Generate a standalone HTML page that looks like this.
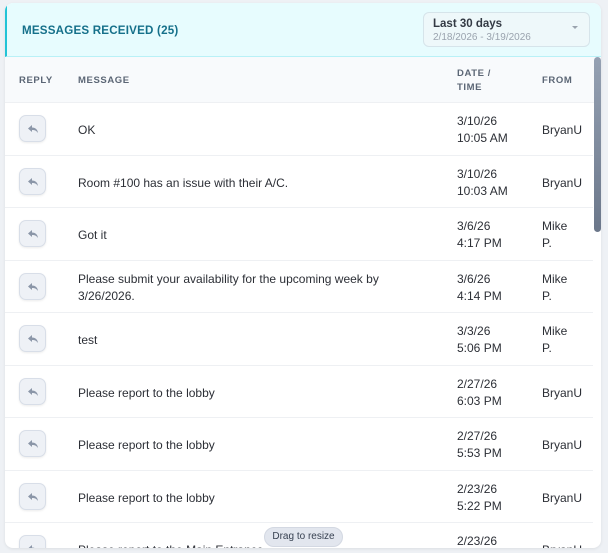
<!DOCTYPE html>
<html><head><style>
*{box-sizing:border-box;margin:0;padding:0}
body{width:608px;height:553px;background:#eef1f5;font-family:"Liberation Sans",sans-serif;overflow:hidden;position:relative}
.card{position:absolute;left:5px;top:3px;width:596px;height:545px;background:#fff;border-radius:8px;overflow:hidden;box-shadow:0 1px 3px rgba(0,0,0,.08)}
.hdr{position:absolute;left:0;top:0;width:596px;height:54px;background:#e7fcfe;border-left:2px solid #22c3d6;border-bottom:1px solid #b9f1f7}
.title{position:absolute;left:15px;top:21px;font-size:11.6px;font-weight:bold;color:#15708a;letter-spacing:.2px}
.dd{position:absolute;left:416px;top:9px;width:167px;height:35px;border:1px solid #d6e4ea;border-radius:6px;background:#eef8fa}
.dd .a{position:absolute;left:9px;top:5px;font-size:11.5px;font-weight:bold;color:#333a44}
.dd .b{position:absolute;left:9px;top:19px;font-size:10px;color:#9aa3ae}
.dd .c{position:absolute;right:11px;top:13px;width:0;height:0;border-left:3px solid transparent;border-right:3px solid transparent;border-top:3px solid #9aa3ae}
.th{position:absolute;left:0;top:54px;width:596px;height:46px;background:#f8fafc;border-bottom:1px solid #eef0f3}
.th div{position:absolute;font-size:9.5px;font-weight:bold;color:#5b6675;letter-spacing:.6px;line-height:14px}
.row{position:absolute;left:0;width:588px;height:52.5px;border-bottom:1px solid #eef0f3}
.btn{position:absolute;left:14px;top:12px;width:27px;height:27px;border:1px solid #d8dee8;border-radius:7px;background:#eef1f6;box-shadow:0 1px 2px rgba(0,0,0,.08)}
.btn svg{position:absolute;left:7px;top:7px}
.msg{position:absolute;left:73px;font-size:12px;color:#2c2f36;line-height:17px;width:340px}
.dt{position:absolute;left:452px;font-size:12px;color:#2c2f36;line-height:17px}
.fr{position:absolute;left:537px;font-size:12px;color:#2c2f36;line-height:17px}
.sb{position:absolute;left:589px;top:54px;width:7px;height:175px;border-radius:4px;background:linear-gradient(#95a1b3,#6b778a)}
.drag{position:absolute;left:264px;top:527px;width:79px;height:20px;border-radius:10px;background:#e2e6ee;border:1px solid #d3d8e2;font-size:10px;color:#374151;text-align:center;line-height:18px;z-index:5}
</style></head><body>
<div class="card">
<div class="hdr"><div class="title">MESSAGES RECEIVED (25)</div>
<div class="dd"><div class="a">Last 30 days</div><div class="b">2/18/2026 - 3/19/2026</div><div class="c"></div></div></div>
<div class="th"><div style="left:14px;top:17px">REPLY</div><div style="left:73px;top:17px">MESSAGE</div><div style="left:452px;top:10px">DATE /<br>TIME</div><div style="left:537px;top:17px">FROM</div></div>
<div id="rows"></div>
<div class="sb"></div>
</div>
<div class="drag">Drag to resize</div>
<script>
var d=[["OK","3/10/26","10:05 AM","BryanU"],["Room #100 has an issue with their A/C.","3/10/26","10:03 AM","BryanU"],["Got it","3/6/26","4:17 PM","Mike<br>P."],["Please submit your availability for the upcoming week by<br>3/26/2026.","3/6/26","4:14 PM","Mike<br>P."],["test","3/3/26","5:06 PM","Mike<br>P."],["Please report to the lobby","2/27/26","6:03 PM","BryanU"],["Please report to the lobby","2/27/26","5:53 PM","BryanU"],["Please report to the lobby","2/23/26","5:22 PM","BryanU"],["Please report to the Main Entrance","2/23/26","5:20 PM","BryanU"]];
var h="";d.forEach(function(r,i){var t=100+i*52.5;var two=r[0].indexOf("<br>")>0;var f2=r[3].indexOf("<br>")>0;
h+='<div class="row" style="top:'+t+'px"><div class="btn"><svg width="12" height="12" viewBox="0 0 12 12"><path d="M5 2L1 5.5 5 9V7c3 0 4.5 .8 6 3-.5-3.5-2.5-5.5-6-5.5z" fill="#8b96a8"/></svg></div><div class="msg" style="top:'+(two?10:19)+'px">'+r[0]+'</div><div class="dt" style="top:10px">'+r[1]+'<br>'+r[2]+'</div><div class="fr" style="top:'+(f2?10:19)+'px">'+r[3]+'</div></div>';});
document.getElementById("rows").innerHTML=h;
</script>
</body></html>
